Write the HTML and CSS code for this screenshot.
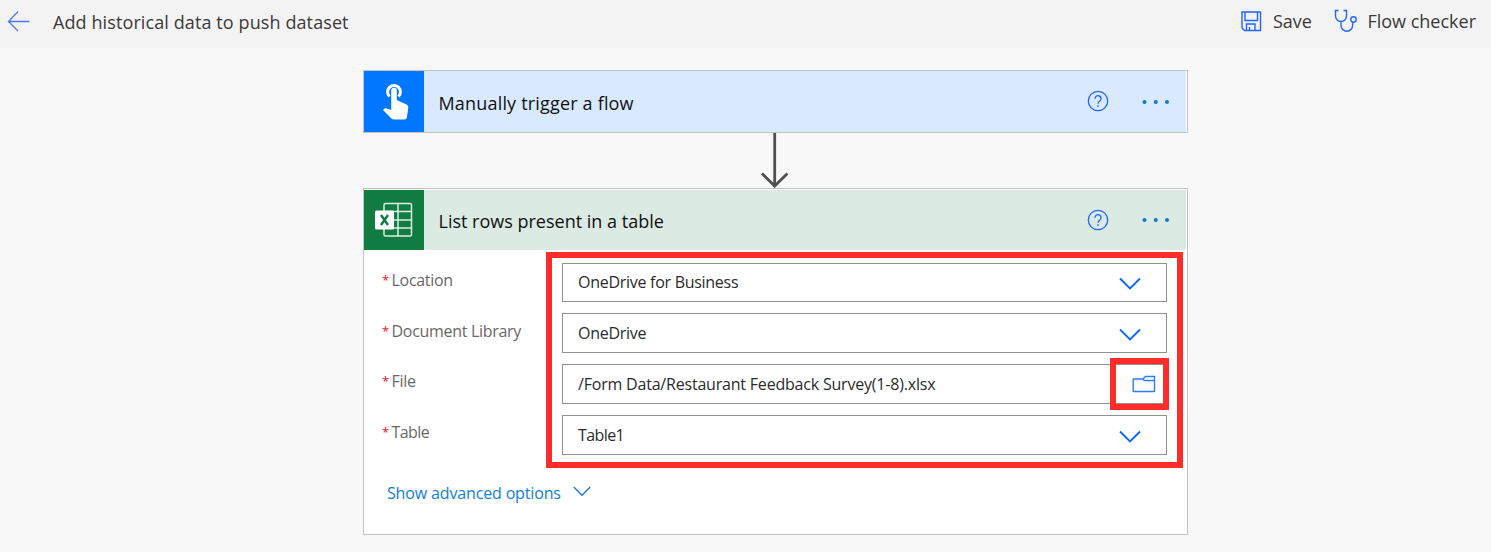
FILE: index.html
```html
<!DOCTYPE html>
<html lang="en">
<head>
<meta charset="utf-8">
<title>Add historical data to push dataset</title>
<link rel="stylesheet" href="styles.css">
</head>
<body>
<header class="topbar">
  <svg class="back" width="24" height="22" viewBox="0 0 24 22"><path d="M11 .5 1.500 10.500l9.500 9.500M1.500 10.500H22.500"/></svg>
  <h1 class="title">Add historical data to push dataset</h1>
  <button class="action save"><svg width="21" height="21" viewBox="0 0 21 21"><path d="M1 1h18.500v18.500H3.500L1 17zM4 1v8.500h12.500V1M5.500 19.500v-6.500h8.500v6.500M8.500 16v3.500"/></svg><span>Save</span></button>
  <button class="action checker"><svg width="24" height="24" viewBox="0 0 24 24"><path d="M4.500 1.500H1.500V7a5.500 5.500 0 0 0 11 0V1.500h-3M7 12.500v4a5.800 5.800 0 0 0 11.600 0v-2.800"/><circle cx="19.500" cy="10.500" r="2.700"/></svg><span>Flow checker</span></button>
</header>
<main class="flow">
  <section class="card trigger">
    <div class="card-head blue">
      <div class="badge"><svg width="60" height="61" viewBox="0 0 60 61"><path class="ring" d="M25.500 25.500a6.400 6.400 0 1 1 9 0"/><path class="hand" d="M27.200 39V19.500a2.800 2.800 0 0 1 5.600 0V29l9.800 4.600q1.900 1 1.700 3l-1.300 9.400q-.4 2.500-2.800 2.500H30q-1.500 0-2.600-1.100L19 39l1.400-1.400q.7-.6 1.700-.4z"/></svg></div>
      <h2 class="card-title">Manually trigger a flow</h2>
      <svg class="help" width="22" height="22" viewBox="0 0 22 22"><circle cx="11" cy="11" r="9.700"/><path d="M8 8.800c0-4.200 6-4 6 0 0 2.400-3 2.400-3 5M11 15.300v1.600"/></svg>
      <svg class="dots" width="28" height="6" viewBox="0 0 28 6"><circle cx="2.500" cy="3" r="2"/><circle cx="13.800" cy="3" r="2"/><circle cx="25" cy="3" r="2"/></svg>
    </div>
  </section>
  <svg class="arrow" width="30" height="55" viewBox="0 0 30 55"><path d="M14.700 0v53M2 40.500 14.700 53 27.400 40.500"/></svg>
  <section class="card action-card">
    <div class="card-head green">
      <div class="badge"><svg width="60" height="60" viewBox="0 0 60 60"><path class="grid" d="M21.500 13.500h24.500q1.500 0 1.500 1.500v29.500q0 1.500-1.500 1.500H21.500q-1.500 0-1.500-1.500V15q0-1.500 1.500-1.500zM34 13.500V46M20 21.500h27.500M20 30h27.500M20 38h27.500"/><rect class="plate" x="11" y="20.500" width="19" height="19" rx="1.500"/><path class="x" d="M17 25l7 10M24 25l-7 10"/></svg></div>
      <h2 class="card-title">List rows present in a table</h2>
      <svg class="help" width="22" height="22" viewBox="0 0 22 22"><circle cx="11" cy="11" r="9.700"/><path d="M8 8.800c0-4.200 6-4 6 0 0 2.400-3 2.400-3 5M11 15.300v1.600"/></svg>
      <svg class="dots" width="28" height="6" viewBox="0 0 28 6"><circle cx="2.500" cy="3" r="2"/><circle cx="13.800" cy="3" r="2"/><circle cx="25" cy="3" r="2"/></svg>
    </div>
    <div class="form">
      <div class="labels">
        <label><i>*</i><span>Location</span></label>
        <label><i>*</i><span>Document Library</span></label>
        <label><i>*</i><span>File</span></label>
        <label><i>*</i><span class="tight">Table</span></label>
      </div>
      <div class="fields">
        <div class="field first"><span>OneDrive for Business</span><svg class="chev" width="24" height="14" viewBox="0 0 24 14"><path d="M2 1.500l10 10 10-10"/></svg></div>
        <div class="field"><span>OneDrive</span><svg class="chev" width="24" height="14" viewBox="0 0 24 14"><path d="M2 1.500l10 10 10-10"/></svg></div>
        <div class="field file"><span>/Form Data/Restaurant Feedback Survey(1-8).xlsx</span><span class="picker"><svg width="24" height="18" viewBox="0 0 24 18"><path d="M2.500 4H11l2.500-2.500h9v14.500q0 .5-.5 .5H2q-.8 0-.8-.8V4.500q0-.5.500-.5zM11 4q.5 1.500 2 1.500h9.500"/></svg></span></div>
        <div class="field"><span class="tight">Table1</span><svg class="chev" width="24" height="14" viewBox="0 0 24 14"><path d="M2 1.500l10 10 10-10"/></svg></div>
      </div>
    </div>
    <a class="more"><span>Show advanced options</span><svg width="18" height="11" viewBox="0 0 18 11"><path d="M.8 1 9 9.300 17.200 1"/></svg></a>
  </section>
</main>
</body>
</html>
```
FILE: styles.css
```css
* { box-sizing: border-box; }
body { margin: 0; height: 552px; overflow: hidden; background: #f8f8f8; font-family: "Open Sans", "Noto Sans", sans-serif; color: #3b3a39; }
svg { display: block; flex: none; fill: none; }
h1, h2 { margin: 0; font-weight: 400; }
span { white-space: nowrap; }
.topbar { display: flex; align-items: center; height: 48px; background: #f3f3f3; padding: 0 15px 5px 6.500px; }
.back { stroke: #4a78ff; stroke-width: 1.3; }
.title { margin-left: 22.500px; font-size: 18px; line-height: 24px; letter-spacing: .1px; flex: 1; }
.action { display: flex; align-items: center; border: 0; background: none; padding: 0; font: 18px/24px "Open Sans", "Noto Sans", sans-serif; color: #3b3a39; }
.action span { margin-top: -1px; }
.action svg { stroke: #2266ff; stroke-width: 1.4; }
.save svg { margin-right: 10.500px; }
.checker { margin-left: 22px; }
.checker svg { margin: -2px 9.500px 0 0; }
.flow { display: flex; flex-direction: column; width: 825px; margin: 22px 0 0 363px; }
.card { border: 1px solid #c3c3c3; background: #fff; padding-right: 1px; }
.trigger { height: 63px; }
.action-card { height: 347px; padding-top: 1px; }
.card-head { display: flex; align-items: center; height: 60px; padding-right: 16px; }
.blue { height: 61px; background: #d9eaff; }
.green { background: #dbeae2; }
.badge { width: 60px; height: 100%; background: #0077ff; }
.green .badge { background: #107c41; }
.ring { stroke: #fff; stroke-width: 3; }
.hand { fill: #fff; }
.grid { stroke: #d8eee1; stroke-width: 1.5; }
.plate { fill: #fff; }
.x { stroke: #107c41; stroke-width: 2.4; }
.card-title { flex: 1; padding: 3px 0 0 14.500px; font-size: 18px; line-height: 24px; color: #111; }
.blue .card-title { letter-spacing: .18px; }
.green .card-title { padding-top: 1px; }
.help { margin: -1px 33.500px 0 0; stroke: #2266ff; stroke-width: 1.3; }
.dots { fill: #0f78d4; }
.arrow { margin-left: 397px; stroke: #505050; stroke-width: 2.8; }
.form { display: flex; height: 218px; }
.labels { width: 182px; padding: 15px 0 0 18px; }
.labels label { display: flex; height: 50.700px; font-size: 16px; line-height: 30px; letter-spacing: -.3px; color: #6a6866; }
.labels i { width: 9.500px; font-style: normal; color: #e81123; font-size: 13px; }
.fields { display: flex; flex-direction: column; gap: 11px; width: 637px; height: 216px; margin-top: 2px; border: 6px solid #ff2c2c; padding: 5px 10px; }
.field { display: flex; align-items: center; justify-content: space-between; height: 40px; flex: none; border: 1px solid #919191; padding: 0 24px 0 15px; font-size: 16px; letter-spacing: -.28px; color: #2b2b2b; }
.first { height: 39px; }
.first span { margin-top: -1px; }
.labels .tight, .field .tight { letter-spacing: -.6px; }
.chev { stroke: #0a66ff; stroke-width: 1.9; margin-top: 3px; }
.file { padding-right: 0; letter-spacing: -.2px; }
.picker { display: flex; align-items: center; justify-content: center; flex: none; width: 59px; height: 52px; margin-right: -3px; padding-left: 8px; border: 6px solid #ff2c2c; }
.picker svg { stroke: #2b7cff; stroke-width: 1.4; }
.more { display: flex; align-items: center; padding: 12px 0 0 23px; gap: 12px; font-size: 16px; line-height: 26px; letter-spacing: -.15px; color: #0f7fd8; }
.more svg { margin-top: -3px; stroke: #1874e0; stroke-width: 1.3; }
```
